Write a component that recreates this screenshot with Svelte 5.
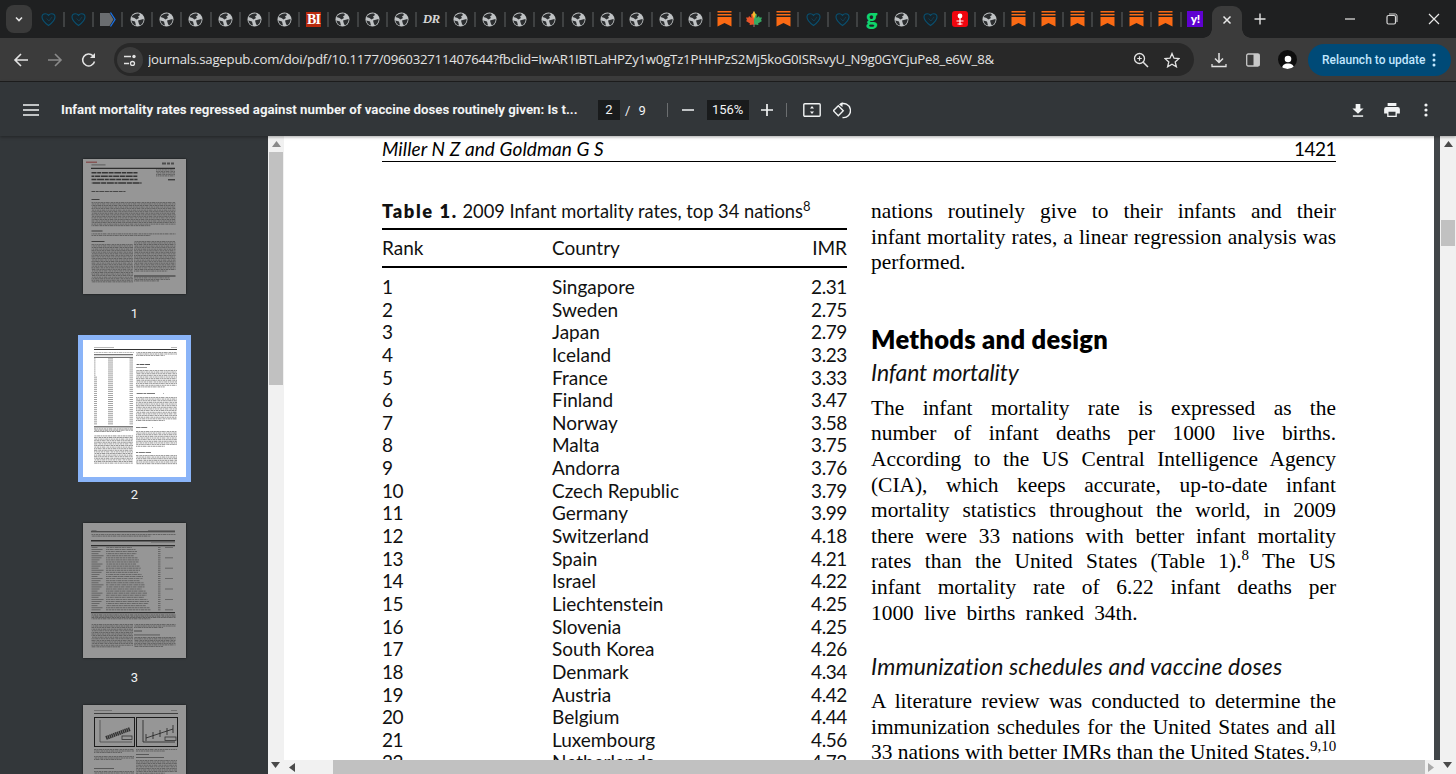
<script>
  const H='heart',G='globe',B='bm';
  const favs=[H,H,'tag',G,G,G,G,G,G,'bi',G,G,G,'dr',G,G,G,G,G,G,G,G,G,B,'leaf',B,H,H,'g',G,H,'red',G,B,B,B,B,B,B,'y'];
  const rows=[['1','Singapore','2.31'],['2','Sweden','2.75'],['3','Japan','2.79'],['4','Iceland','3.23'],['5','France','3.33'],['6','Finland','3.47'],['7','Norway','3.58'],['8','Malta','3.75'],['9','Andorra','3.76'],['10','Czech Republic','3.79'],['11','Germany','3.99'],['12','Switzerland','4.18'],['13','Spain','4.21'],['14','Israel','4.22'],['15','Liechtenstein','4.25'],['16','Slovenia','4.25'],['17','South Korea','4.26'],['18','Denmark','4.34'],['19','Austria','4.42'],['20','Belgium','4.44'],['21','Luxembourg','4.56'],['22','Netherlands','4.73']];
  const dash='2.600 .5 1.500 .5 3.400 .5 1 .5 2.200 .5 1.800 .5';
  function block(x,y,w,n,lh=1.6,last=0.7){const o=[];for(let i=0;i<n;i++)o.push({x,y:y+i*lh,w:i===n-1?w*last:w,h:.8,d:dash,o:.55});return o;}
  const S=(x,y,w,h=.8,o=.6)=>({x,y,w,h,o});
  const t1=[{x:3,y:2.500,w:11,h:1.500,o:.6,c:'#7a2a2a'},S(79,3.500,4,2),S(84,3.500,3,2),S(88,3.500,3,2),S(8.500,5.500,14),S(8,8.800,84,1.100,.85),
    ...block(73,10.500,19,5,1.500,1),S(85,20,7,1.400,.7),
    ...[13,16.400,19.800].map(y=>({x:8.500,y,w:46,h:1.500,o:.8,d:'6 .7 5 .7 7 .7 4 .7'})),{x:8.500,y:23.200,w:50,h:1.500,o:.8,d:'7 .7 3 .7 8 .7 5 .7'},
    {x:8.500,y:32,w:34,h:1,o:.65,d:'4 .6 3 .6 5 .6'},S(8.500,40,8,1,.7),...block(8.500,43,84,16,1.550),
    S(8.500,71.500,11,1,.7),...block(8.500,74.500,84,2,1.700),S(8.500,82,13,1,.7),...block(8.500,85,41.500,25,1.560,1),...block(51,82,41.500,20,1.560,.8),S(51,116.500,41.500,1,.85),...block(51,118.500,36,3,1.500)];
  const t2=[S(11,7,20,.7,.5),S(88,7,6,.7,.5),S(11,9,83,1,.85),{x:11,y:12,w:40,h:.7,d:dash,o:.5},S(11,14,39,.8,.8),S(11,15.500,39,.6,.4),S(11,17,39,.8,.8),
    ...Array.from({length:33},(_,i)=>[{x:11,y:18.500+i*2.030,w:i<9?1.500:3,h:.8,o:.5},{x:25,y:18.500+i*2.030,w:5+(i*7)%7,h:.8,o:.5},{x:46.500,y:18.500+i*2.030,w:3.500,h:.8,o:.5}]).flat(),
    S(11,86,39,1.600,.55),...block(11,88.500,39,3,1.300),...block(11,95.500,39,18,1.600,1),
    ...block(53,12,41,3,1.600),{x:53,y:24,w:14,h:1,o:.7,d:'5 .6 2 .6 5 .6'},S(53,27,11,.8,.6),...block(53,30,41,11,1.650),{x:53,y:53,w:33,h:.9,o:.65,d:'8 .6 6 .6 3 .6 8'},...block(53,57,41,15,1.650),{x:53,y:87,w:18,h:.9,o:.65,d:'5 .6 6 .6 6'},...block(53,91,41,10,1.650),{x:53,y:112,w:15,h:.9,o:.65,d:'5 .6 6 .6 6'},...block(53,115,41,6,1.650,1)];
  const t3=[S(8.500,7,5,.7,.5),S(65,7,27,.7,.5),S(8,8.300,84,.9,.85),...block(8.500,11,84,2,1.700),S(8,17,84,1.400,.85),S(68,19,24,.7,.35),S(8,22,84,1.300,.85),
    ...Array.from({length:31},(_,i)=>[{x:8.500,y:24+i*2.080,w:6+(i*5)%7,h:.8,o:.5},{x:23,y:24+i*2.080,w:26+((i*i*3)%8)+i*.5,h:.8,o:.5,d:'4 .5 2 .5 3 .5 1 .5'},{x:75,y:24+i*2.080,w:2.500,h:.8,o:.5},...(i%5===0?[{x:82,y:24+i*2.080,w:8,h:.8,o:.5}]:[])]).flat(),
    S(8,89,84,1.300,.85),...block(8.500,91.500,84,4,1.300),...block(8.500,101,41.500,15,1.600),...block(51,101,41.500,3,1.600),S(51,107.500,8,1,.6),S(51,111.500,26,.9,.55),...block(51,114,41.500,7,1.500)];
  const t4=[S(11,5,18,.7,.5),S(88,5,6,.7,.5),S(11,8,84,.9,.85)];
  const t4b=[...block(11,44,40,3),...block(11,51,40,3),S(11,63,20,.9,.6),...block(11,66,40,3),...block(53,44,41,2),S(53,49,13,.9,.6),S(53,52,28,.9,.6),...block(53,55,41,9)];
</script>

{#snippet ink(list,fill)}
  {#each list as r,i}
    <line x1={r.x} y1={r.y+r.h/2} x2={r.x+r.w} y2={r.y+r.h/2} stroke={r.c||fill} stroke-width={r.h} stroke-dasharray={r.d||'none'} stroke-dashoffset={(i*3.7)%15} opacity={r.o}/>
  {/each}
{/snippet}

<div class="browser">
  <header class="strip">
    <div class="chev"><svg width="12" height="12" viewBox="0 0 12 12"><path d="M3 4.500 6 7.500 9 4.500" fill="none" stroke="#e3e3e3" stroke-width="1.600"/></svg></div>
    <div class="tabs">
      {#each favs as f,i}
        <div class="tab" class:nosep={i===favs.length-1}>
          {#if f===G}
            <svg width="15" height="15" viewBox="0 0 15 15"><circle cx="7.500" cy="7.500" r="7" fill="#bfc2c4"/><path d="M1.500 5C3 2.500 6 1 9 1.500L10 3 8 4.500 9 6 6.500 7.500 4.500 6ZM8 8.500l5.500-1.500C14 9.500 12 12.500 10 13.500 8.500 12 8.800 10.500 8 8.500ZM1.300 8.500 5 9.500 6 13.500C3.500 13.500 2 11 1.300 8.500Z" fill="#2b2d2f"/></svg>
          {:else if f===H}
            <svg width="15" height="15" viewBox="0 0 15 15"><path d="M7.500 13.500C4 11 1 8 1 5 1 3 2.600 1.700 4.300 1.700 5.600 1.700 6.800 2.400 7.500 3.400 8.200 2.400 9.400 1.700 10.700 1.700 12.400 1.700 14 3 14 5 14 8 11 11 7.500 13.500Z" fill="#16232a" stroke="#0a5070" stroke-width="1.100"/><path d="M5.500 6.500 8 9 11 5" fill="none" stroke="#143a4c" stroke-width="1"/></svg>
          {:else if f==='tag'}
            <svg width="16" height="15" viewBox="0 0 16 15"><path d="M0 1H9.500L13.500 7.500 9.500 14H0Z" fill="#6a6d70"/><path d="M10.500 .5 15 7.500 10.500 14.500" fill="none" stroke="#1a73e8" stroke-width="1.300"/></svg>
          {:else if f==='bi'}
            <span class="bi">BI</span>
          {:else if f==='dr'}
            <span class="dr">DR</span>
          {:else if f===B}
            <svg width="15" height="16" viewBox="0 0 15 16"><path d="M.5 0h14v1.500H.5ZM.5 3h14v1.500H.5ZM.5 6h14v9.500L7.500 12 .5 15.500Z" fill="#fb6a14"/></svg>
          {:else if f==='leaf'}
            <svg width="16" height="16" viewBox="0 0 16 16"><path d="M8 0 9.800 3.500 11 3 10.500 7 13 5 13.500 6.500 16 6.500 15 9 16 10 12 12.500 12.500 14 8 13.500Z" fill="#37a862"/><path d="M8 0 6.200 3.500 5 3 5.500 7 3 5 2.500 6.500 0 6.500 1 9 0 10 4 12.500 3.500 14 8 13.500Z" fill="#e8542a"/><path d="M8 0 9.800 3.500 8 8 6.200 3.500Z" fill="#f4b82c"/><path d="M7.600 13h.8v3h-.8Z" fill="#b88"/></svg>
          {:else if f==='g'}
            <span class="gg">g</span>
          {:else if f==='red'}
            <svg width="16" height="16" viewBox="0 0 16 16"><rect width="16" height="16" rx="3" fill="#f0060f"/><circle cx="8" cy="5" r="2.400" fill="#fff"/><path d="M7.400 7h1.200v7H7.400ZM4.500 9.500h7v1h-7ZM5.500 12.500h5v1h-5Z" fill="#fff"/></svg>
          {:else if f==='y'}
            <span class="yh">y!</span>
          {/if}
        </div>
      {/each}
      <div class="active">
        <svg width="12" height="12" viewBox="0 0 12 12"><path d="M2.500 2.500 9.500 9.500M9.500 2.500 2.500 9.500" stroke="#e8e8e8" stroke-width="1.500"/></svg>
      </div>
      <svg class="plus" width="12" height="12" viewBox="0 0 12 12"><path d="M6 .5v11M.5 6h11" stroke="#e3e3e3" stroke-width="1.400"/></svg>
    </div>
    <div class="winctl">
      <svg width="12" height="12" viewBox="0 0 12 12"><path d="M1 6h10" stroke="#d8d8d8" stroke-width="1.300"/></svg>
      <svg width="12" height="12" viewBox="0 0 12 12"><rect x="1" y="2.500" width="8.500" height="8.500" rx="1.500" fill="none" stroke="#d8d8d8" stroke-width="1.200"/><path d="M3 1H9.500A1.800 1.800 0 0 1 11 2.800V9" fill="none" stroke="#d8d8d8" stroke-width="1"/></svg>
      <svg width="12" height="12" viewBox="0 0 12 12"><path d="M1 1 11 11M11 1 1 11" stroke="#e8e8e8" stroke-width="1.200"/></svg>
    </div>
  </header>

  <nav class="toolbar">
    <div class="navbtn"><svg width="16" height="16" viewBox="0 0 16 16"><path d="M15 8H2M8 2 2 8 8 14" fill="none" stroke="#e3e3e3" stroke-width="1.600"/></svg></div>
    <div class="navbtn"><svg width="16" height="16" viewBox="0 0 16 16"><path d="M1 8H14M8 2 14 8 8 14" fill="none" stroke="#8a8a8a" stroke-width="1.600"/></svg></div>
    <div class="navbtn"><svg width="16" height="16" viewBox="0 0 16 16"><path d="M13.500 9.500A6 6 0 1 1 12 3.800" fill="none" stroke="#e3e3e3" stroke-width="1.500"/><path d="M14 1v5h-5Z" fill="#e3e3e3"/></svg></div>
    <div class="omni">
      <div class="site"><svg width="14" height="12" viewBox="0 0 14 12"><path d="M1 2.500h7M1 9.500h5" stroke="#e3e3e3" stroke-width="1.400"/><circle cx="11" cy="2.500" r="1.700" fill="#e3e3e3"/><circle cx="9.500" cy="9.500" r="2" fill="none" stroke="#e3e3e3" stroke-width="1.300"/></svg></div>
      <span class="url">journals.sagepub.com/doi/pdf/10.1177/096032711407644?fbclid=IwAR1IBTLaHPZy1w0gTz1PHHPzS2Mj5koG0ISRsvyU_N9g0GYCjuPe8_e6W_8&amp;</span>
      <svg class="zoomi" width="16" height="16" viewBox="0 0 16 16"><circle cx="6.500" cy="6.500" r="5" fill="none" stroke="#e3e3e3" stroke-width="1.300"/><path d="M10.200 10.200 15 15" stroke="#e3e3e3" stroke-width="1.500"/><path d="M4.200 6.500h4.600M6.500 4.200v4.600" stroke="#e3e3e3" stroke-width="1.200"/></svg>
      <svg class="star" width="16" height="16" viewBox="0 0 16 16"><path d="M8 1.500 10 6.200 15 6.600 11.200 9.900 12.400 14.800 8 12.200 3.600 14.800 4.800 9.900 1 6.600 6 6.200Z" fill="none" stroke="#e3e3e3" stroke-width="1.300"/></svg>
    </div>
    <svg class="dl" width="16" height="16" viewBox="0 0 16 16"><path d="M8 1v9M4 6.500 8 10.500 12 6.500" fill="none" stroke="#e3e3e3" stroke-width="1.500"/><path d="M1 12v2.500h14V12" fill="none" stroke="#e3e3e3" stroke-width="1.300"/></svg>
    <svg class="side" width="14" height="14" viewBox="0 0 14 14"><rect x=".7" y="1" width="12.600" height="12" rx="1.500" fill="none" stroke="#c8c8c8" stroke-width="1.300"/><rect x="7.500" y="1" width="5.800" height="12" fill="#c8c8c8"/></svg>
    <div class="profile"><svg width="14" height="14" viewBox="0 0 14 14"><circle cx="7" cy="4" r="3.300" fill="#fff"/><path d="M1 14c0-4 2.500-5.500 6-5.500s6 1.500 6 5.500Z" fill="#fff"/></svg></div>
    <div class="relaunch"><span>Relaunch to update</span><svg width="4" height="14" viewBox="0 0 4 14"><circle cx="2" cy="2" r="1.500" fill="#c2e7ff"/><circle cx="2" cy="7" r="1.500" fill="#c2e7ff"/><circle cx="2" cy="12" r="1.500" fill="#c2e7ff"/></svg></div>
  </nav>

  <div class="pdfbar">
    <svg class="menu" width="16" height="12" viewBox="0 0 16 12"><path d="M0 1h16M0 6h16M0 11h16" stroke="#f1f3f4" stroke-width="1.600"/></svg>
    <div class="title">Infant mortality rates regressed against number of vaccine doses routinely given: Is t...</div>
    <div class="pagebox">2</div>
    <span class="slash">/</span><span class="pcount">9</span>
    <i class="sep s1"></i>
    <svg class="minus" width="14" height="14" viewBox="0 0 14 14"><path d="M1 7h12" stroke="#f1f3f4" stroke-width="1.500"/></svg>
    <div class="zoombox">156%</div>
    <svg class="pl" width="14" height="14" viewBox="0 0 14 14"><path d="M7 1v12M1 7h12" stroke="#f1f3f4" stroke-width="1.700"/></svg>
    <i class="sep s2"></i>
    <svg class="fit" width="18" height="14" viewBox="0 0 18 14"><rect x=".8" y=".8" width="16.400" height="12.400" rx="1" fill="none" stroke="#f1f3f4" stroke-width="1.400"/><path d="M9 3 11 5.500H7ZM9 11 7 8.500h4Z" fill="#f1f3f4"/></svg>
    <svg class="rot" width="18" height="18" viewBox="0 0 18 18"><rect x="1.800" y="6.200" width="7" height="7" transform="rotate(45 5.300 9.700)" fill="none" stroke="#f1f3f4" stroke-width="1.400"/><path d="M7 3.500A7 7 0 1 1 9.500 16.500" fill="none" stroke="#f1f3f4" stroke-width="1.400"/><path d="M9.500 1 6 3.500 9.500 6Z" fill="#f1f3f4"/></svg>
    <svg class="pdl" width="14" height="14" viewBox="0 0 14 15"><path d="M4.500 1h5v5H13L7 11.500 1 6h3.500Z" fill="#f1f3f4"/><path d="M1.500 14h11" stroke="#f1f3f4" stroke-width="1.600"/></svg>
    <svg class="prt" width="16" height="14" viewBox="0 0 18 16"><path d="M4 0h10v3.500H4ZM2.500 4.500h13A2.500 2.500 0 0 1 18 7v5h-3.500v4h-11v-4H0V7a2.500 2.500 0 0 1 2.500-2.500Z" fill="#f1f3f4"/><rect x="5" y="10" width="8" height="4.500" fill="#323639"/></svg>
    <svg class="more" width="4" height="14" viewBox="0 0 4 14"><circle cx="2" cy="2" r="1.600" fill="#f1f3f4"/><circle cx="2" cy="7" r="1.600" fill="#f1f3f4"/><circle cx="2" cy="12" r="1.600" fill="#f1f3f4"/></svg>
  </div>

  <div class="content">
    <aside class="sidebar">
      <div class="thumb gray">
        <svg width="103" height="135" viewBox="0 0 103 135">{@render ink(t1,'#1c1c1c')}</svg>
      </div>
      <div class="lbl">1</div>
      <div class="thumb sel">
        <svg width="103" height="137" viewBox="0 0 103 137">{@render ink(t2,'#111')}</svg>
      </div>
      <div class="lbl l2">2</div>
      <div class="thumb gray t3">
        <svg width="103" height="135" viewBox="0 0 103 135">{@render ink(t3,'#1c1c1c')}</svg>
      </div>
      <div class="lbl">3</div>
      <div class="thumb gray t4">
        <svg width="103" height="70" viewBox="0 0 103 70">
          {@render ink(t4,'#1c1c1c')}
          <rect x="11.500" y="12.500" width="40" height="29" fill="none" stroke="#1c1c1c" stroke-width="1"/>
          <rect x="53.500" y="12.500" width="41" height="29" fill="none" stroke="#1c1c1c" stroke-width="1"/>
          <path d="M23 33 47 24" stroke="#333" stroke-width="4" stroke-dasharray="1.500 .5"/>
          <path d="M63 33 90 24M63 29v7M70 27v7M77 25v7M84 23v7M90 20v8M60 15v22H92" stroke="#222" stroke-width=".8" fill="none"/>
          <path d="M17 15v22H49" stroke="#333" stroke-width=".6" fill="none"/>
          <rect x="39" y="31" width="10" height="3.500" fill="none" stroke="#333" stroke-width=".8"/><rect x="82" y="32" width="11" height="3.500" fill="none" stroke="#333" stroke-width=".8"/>
          {@render ink(t4b,'#1c1c1c')}
        </svg>
      </div>
    </aside>
    <div class="sb-v thin">
      <svg class="ar" width="9" height="6" viewBox="0 0 9 6"><path d="M4.500 0 9 6H0Z" fill="#8a8a8a"/></svg>
      <div class="thumbbar big"></div>
      <svg class="ar dn" width="9" height="6" viewBox="0 0 9 6"><path d="M4.500 6 9 0H0Z" fill="#4a4a4a"/></svg>
    </div>
    <div class="center">
      <div class="viewer">
        <main class="page">
          <div class="runhead"><em>Miller N Z and Goldman G S</em><span>1421</span></div>
          <div class="cols">
            <section class="left">
              <div class="caption"><b>Table 1.</b> 2009 Infant mortality rates, top 34 nations<sup>8</sup></div>
              <div class="thead"><span>Rank</span><span>Country</span><span>IMR</span></div>
              {#each rows as r}
                <div class="row"><span class="n">{r[0]}</span><span>{r[1]}</span><span class="n">{r[2]}</span></div>
              {/each}
            </section>
            <section class="right">
              <div class="para first">
                <span class="l">nations routinely give to their infants and their</span>
                <span class="l">infant mortality rates, a linear regression analysis was</span>
                <span class="l end">performed.</span>
              </div>
              <h2>Methods and design</h2>
              <h3>Infant mortality</h3>
              <div class="para">
                <span class="l">The infant mortality rate is expressed as the</span>
                <span class="l">number of infant deaths per 1000 live births.</span>
                <span class="l">According to the US Central Intelligence Agency</span>
                <span class="l">(CIA), which keeps accurate, up-to-date infant</span>
                <span class="l">mortality statistics throughout the world, in 2009</span>
                <span class="l">there were 33 nations with better infant mortality</span>
                <span class="l">rates than the United States (Table 1).<sup>8</sup> The US</span>
                <span class="l">infant mortality rate of 6.22 infant deaths per</span>
                <span class="l end">1000 live births ranked 34th.</span>
              </div>
              <h3 class="imm">Immunization schedules and vaccine doses</h3>
              <div class="para">
                <span class="l">A literature review was conducted to determine the</span>
                <span class="l">immunization schedules for the United States and all</span>
                <span class="l">33 nations with better IMRs than the United States.<sup>9,10</sup></span>
              </div>
            </section>
          </div>
        </main>
        <div class="gutter"></div>
      </div>
      <div class="sb-h">
        <svg width="6" height="9" viewBox="0 0 6 9"><path d="M0 4.500 6 0V9Z" fill="#4a4a4a"/></svg>
        <div class="hthumb"></div>
        <svg width="6" height="9" viewBox="0 0 6 9"><path d="M6 4.500 0 0V9Z" fill="#a8a8a8"/></svg>
      </div>
    </div>
    <div class="sb-v">
      <svg class="ar" width="9" height="6" viewBox="0 0 9 6"><path d="M4.500 0 9 6H0Z" fill="#4a4a4a"/></svg>
      <div class="thumbbar small"></div>
      <svg class="ar dn" width="9" height="6" viewBox="0 0 9 6"><path d="M4.500 6 9 0H0Z" fill="#4a4a4a"/></svg>
    </div>
  </div>
</div>

<style>
  :global(body){margin:0;background:#33373a;overflow:hidden}
  .browser{width:1456px;height:774px;overflow:hidden;display:flex;flex-direction:column;font-family:Roboto,"Liberation Sans",sans-serif}
  .strip{height:38px;background:#1f2021;display:flex;align-items:flex-start;flex:none;position:relative}
  .chev{width:26px;height:28px;margin:5px 0 0 6px;background:#3a3a3a;border-radius:8px;display:flex;align-items:center;justify-content:center;flex:none}
  .tabs{display:flex;align-items:center;height:38px;margin-left:2.300px;flex:none}
  .tab{width:29.400px;height:38px;display:flex;align-items:center;justify-content:center;position:relative;flex:none}
  .tab::after{content:"";position:absolute;right:-1px;top:12px;width:2px;height:15px;background:#3f4142}
  .tab.nosep::after{display:none}
  .bi{width:15px;height:15px;background:#b8290c;color:#fff;font:bold 14px/15px "Liberation Serif",serif;text-align:center;letter-spacing:-1px}
  .dr{color:#d4d4d4;font:italic bold 13px/14px "Liberation Serif",serif;letter-spacing:-.8px}
  .gg{color:#0fd46c;font:900 22px/16px Lato,sans-serif;height:20px}
  .yh{width:16px;height:16px;background:#5f01d1;color:#fff;font:900 12px/15px Lato,sans-serif;text-align:center;letter-spacing:-.5px}
  .active{width:30px;height:32px;margin:6px 0 0 2px;background:#3b3b3b;border-radius:9px 9px 0 0;display:flex;align-items:center;justify-content:center;padding-bottom:5px;box-sizing:border-box;position:relative;flex:none}
  .active::before,.active::after{content:"";position:absolute;bottom:0;width:9px;height:9px;background:radial-gradient(circle at 0 0,#1f2021 8.500px,#3b3b3b 9px)}
  .active::before{left:-9px}
  .active::after{right:-9px;background:radial-gradient(circle at 100% 0,#1f2021 8.500px,#3b3b3b 9px)}
  .plus{margin-left:12px;flex:none}
  .winctl{margin-left:auto;display:flex;gap:30px;padding:13px 16px 0 0;flex:none}
  .toolbar{height:43px;background:#3b3b3b;display:flex;align-items:center;flex:none;border-bottom:1px solid #1e1e1e;box-sizing:content-box}
  .navbtn{width:34px;display:flex;justify-content:center;flex:none}
  .navbtn:first-child{margin-left:4px}
  .omni{width:1080px;height:33px;margin-left:8px;background:#282828;border-radius:17px;display:flex;align-items:center;flex:none}
  .site{width:26px;height:26px;margin-left:3px;border-radius:50%;background:#3c3c3c;display:flex;align-items:center;justify-content:center;flex:none}
  .url{margin-left:5px;color:#e3e3e3;font:13.200px/33px "Open Sans",sans-serif;letter-spacing:-.22px;white-space:nowrap;width:990px;overflow:hidden;flex:none}
  .zoomi{margin-left:-5px;flex:none}
  .star{margin-left:15px;flex:none}
  .dl{margin-left:17px;flex:none}
  .side{margin-left:19px;flex:none}
  .profile{width:19px;height:19px;border-radius:50%;background:#0e0e0e;margin-left:18px;display:flex;align-items:flex-end;justify-content:center;overflow:hidden;flex:none}
  .relaunch{width:143px;height:32px;margin-left:11px;border-radius:16px;background:#004a77;color:#c2e7ff;display:flex;align-items:center;padding-left:14px;box-sizing:border-box;font:500 12px/32px Roboto,sans-serif;flex:none}
  .relaunch svg{margin-left:6px}
  .pdfbar{height:54px;padding-top:2px;box-sizing:border-box;background:#323639;display:flex;align-items:center;color:#f1f3f4;flex:none;position:relative;z-index:2;box-shadow:0 1px 3px rgba(0,0,0,.35)}
  .menu{margin-left:23px;flex:none}
  .title{margin-left:22px;width:516px;font:700 13.250px/20px Roboto,sans-serif;white-space:nowrap;flex:none}
  .pagebox{margin-left:21px;width:22px;height:20px;background:#191b1c;text-align:center;font:13px/20px Roboto,sans-serif;flex:none}
  .slash{margin-left:5px;font:13px Roboto,sans-serif;flex:none}
  .pcount{margin-left:8px;font:13px Roboto,sans-serif;flex:none}
  .sep{width:1px;height:14px;background:#6b6e70;flex:none}
  .s1{margin-left:21px}
  .minus{margin-left:13px;flex:none}
  .zoombox{margin-left:12px;width:42px;height:20px;background:#191b1c;text-align:center;font:13px/20px Roboto,sans-serif;flex:none}
  .pl{margin-left:11px;flex:none}
  .s2{margin-left:12px}
  .fit{margin-left:16px;flex:none}
  .rot{margin-left:12px;flex:none}
  .pdl{margin-left:500px;flex:none}
  .prt{margin-left:19px;flex:none}
  .more{margin-left:24px;flex:none}
  .content{flex:1;min-height:0;display:flex}
  .sidebar{width:268px;background:#33373a;flex:none;overflow:hidden;padding-top:23px;box-sizing:border-box;display:flex;flex-direction:column;align-items:center}
  .thumb{flex:none;margin-left:1px;font-size:0;box-shadow:0 0 2px rgba(0,0,0,.7)}
  .gray{width:103px;height:135px;background:#969696}
  .sel{width:103px;height:137px;background:#fff;border:5px solid #8ab4f8;margin-top:13px;box-shadow:none}
  .t3{margin-top:20px}
  .t4{margin-top:19px;height:70px}
  .lbl{color:#f1f3f4;font:13px/16px Roboto,sans-serif;margin:12px 0 0 1px;height:16px;flex:none}
  .l2{margin-top:5px}
  .sb-v{width:16px;background:#f1f1f1;flex:none;position:relative;display:flex;flex-direction:column;align-items:center}
  .ar{position:absolute;top:5px;left:4px}
  .ar.dn{top:auto;bottom:6px;left:3px}
  .thumbbar{background:#c1c1c1;width:14px;position:absolute;left:1px}
  .big{top:16px;height:233px}
  .small{top:84px;height:26px}
  .center{flex:1;min-width:0;display:flex;flex-direction:column}
  .viewer{flex:1;min-height:0;display:flex;background:#414548}
  .page{width:1150px;background:#fff;color:#000;overflow:hidden;flex:none;padding:0 98px;box-sizing:border-box;height:624px}
  .gutter{flex:1}
  .runhead{display:flex;justify-content:space-between;height:25px;border-bottom:1.500px solid #000;font:italic 19px/25px Lato,sans-serif;box-sizing:content-box}
  .runhead span{font-style:normal;letter-spacing:-.5px}
  .runhead em{letter-spacing:.1px}
  .cols{display:flex;gap:24px}
  .left{width:465px;flex:none;font-family:Lato,sans-serif;font-size:19px;color:#111}
  .caption{padding-top:36px;line-height:26px;font-size:18.300px;white-space:nowrap;border-bottom:2px solid #000;height:30px;box-sizing:content-box}
  .caption b{font-weight:800;letter-spacing:1.600px}
  .caption sup{font-size:13px;line-height:0}
  .thead{display:grid;grid-template-columns:170px 1fr auto;height:36px;line-height:36px;border-bottom:2px solid #000;margin-bottom:8px}
  .row{display:grid;grid-template-columns:170px 1fr auto;height:22.650px;line-height:22.650px}
  .n{letter-spacing:-.4px}
  .row span:last-child{text-align:right}
  .right{width:465px;flex:none;font:21.400px/25.600px "Liberation Serif",serif;color:#000}
  .para.first{padding-top:37px}
  .l{display:block;text-align:justify;text-align-last:justify;white-space:nowrap}
  .l.end{text-align-last:left;word-spacing:5px}
  .l sup{font-size:15px;line-height:0}
  h2{font:800 25.500px/32px Lato,sans-serif;margin:47px 0 0;letter-spacing:.3px}
  h3{font:italic 23px/32px Lato,sans-serif;margin:1px 0 8px;color:#111;letter-spacing:-.1px}
  h3.imm{margin:24px 0 7px;white-space:nowrap;letter-spacing:.15px}
  .sb-h{height:14px;background:#f1f1f1;display:flex;align-items:center;flex:none;padding:0 6px 0 5px}
  .hthumb{width:1092px;height:14px;background:#c1c1c1;margin-left:38px;margin-right:3px}
</style>
